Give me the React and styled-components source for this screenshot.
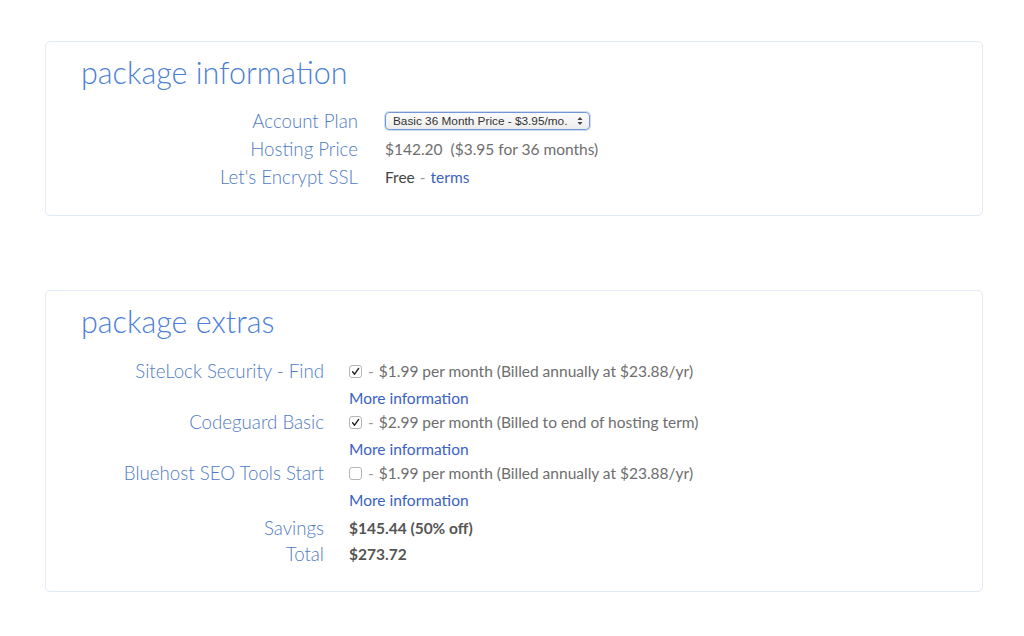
import React from "react";
import styled, { createGlobalStyle } from "styled-components";

const Global = createGlobalStyle`
  html, body { margin: 0; padding: 0; background: #ffffff; }
  body { font-family: Lato, "Open Sans", sans-serif; }
  * { box-sizing: border-box; }
`;

const Page = styled.div`
  width: 1024px;
  height: 636px;
  padding: 41px 41px 0 45px;
  display: flex;
  flex-direction: column;
  gap: 74px;
`;

const Panel = styled.section`
  width: 938px;
  height: ${(p) => p.$h}px;
  border: 1px solid #e1eaf6;
  border-radius: 5px;
  padding: 12px 35px 0 35px;
`;

const Title = styled.h2`
  margin: 0;
  font-weight: 300;
  font-size: 30.5px;
  line-height: 36px;
  color: #4d7fd6;
`;

const Grid = styled.div`
  display: grid;
  grid-template-columns: ${(p) => p.$label}px auto;
  column-gap: ${(p) => p.$gap}px;
  margin-top: ${(p) => p.$mt}px;
  justify-content: start;
`;

const Label = styled.div`
  text-align: right;
  font-weight: 300;
  font-size: 18.7px;
  line-height: ${(p) => p.$lh || 28}px;
  height: ${(p) => (p.$lh || 28) + (p.$pt || 0)}px;
  padding-top: ${(p) => p.$pt || 0}px;
  color: #4f7bc4;
  white-space: nowrap;
`;

const Value = styled.div`
  font-size: 15.5px;
  line-height: ${(p) => p.$lh || 28}px;
  height: ${(p) => (p.$lh || 28) + (p.$pt || 0)}px;
  padding-top: ${(p) => p.$pt || 0}px;
  color: #6e6e6e;
  font-weight: 400;
  white-space: nowrap;
  display: flex;
  align-items: center;
`;

const Strong = styled.span`
  color: ${(p) => (p.$plain ? "#444444" : "#555555")};
  font-weight: ${(p) => (p.$plain ? 400 : 700)};
`;

const Dash = styled.span`
  color: #9a9a9a;
  margin: 0 5px;
`;

const Link = styled.a`
  color: #3a62c2;
  text-decoration: none;
  font-size: 15.5px;
`;

const SelectWrap = styled.div`
  position: relative;
  display: flex;
  width: 205px;
  height: 18px;
`;

const Select = styled.select`
  appearance: none;
  -webkit-appearance: none;
  display: block;
  margin: 0;
  width: 100%;
  height: 18px;
  border: 1px solid #7297d6;
  border-radius: 4px;
  background: linear-gradient(#fdfdfd, #ececec);
  font-family: "Liberation Sans", Arial, sans-serif;
  font-size: 11.8px;
  color: #333;
  padding: 0 0 0 7px;
  line-height: 16px;
  box-shadow: 0 0 0 1px #d0ddf3;
  outline: none;
`;

const SelectArrows = styled.svg`
  position: absolute;
  right: 7px;
  top: 4px;
  pointer-events: none;
`;

const Box = styled.span`
  width: 13px;
  height: 13px;
  border: 1px solid #b5b5b5;
  border-radius: 3px;
  background: #fff;
  display: inline-flex;
  align-items: center;
  justify-content: center;
  margin-right: 1px;
  margin-top: 1px;
`;

function Checkbox({ checked }) {
  return (
    <Box>
      {checked && (
        <svg width="9" height="9" viewBox="0 0 9 9">
          <path d="M1.6 4.8 L3.6 7.2 L7.6 1.4" fill="none" stroke="#222" strokeWidth="1.4" strokeLinecap="round" strokeLinejoin="round" />
        </svg>
      )}
    </Box>
  );
}

const extras = [
  { name: "SiteLock Security - Find", checked: true, text: "$1.99 per month (Billed annually at $23.88/yr)" },
  { name: "Codeguard Basic", checked: true, text: "$2.99 per month (Billed to end of hosting term)" },
  { name: "Bluehost SEO Tools Start", checked: false, text: "$1.99 per month (Billed annually at $23.88/yr)" },
];

export default function App() {
  return (
    <>
      <Global />
      <Page>
        <Panel $h={175}>
          <Title>package information</Title>
          <Grid $label={277} $gap={27} $mt={17}>
            <Label>Account Plan</Label>
            <Value>
              <SelectWrap>
                <Select defaultValue="basic36">
                  <option value="basic36">Basic 36 Month Price - $3.95/mo.</option>
                </Select>
                <SelectArrows width="6" height="10" viewBox="0 0 6 10">
                  <path d="M0.5 4 L3 1 L5.5 4 Z" fill="#444" />
                  <path d="M0.5 6 L3 9 L5.5 6 Z" fill="#444" />
                </SelectArrows>
              </SelectWrap>
            </Value>
            <Label>Hosting Price</Label>
            <Value>$142.20&nbsp;&nbsp;($3.95 for 36 months)</Value>
            <Label>Let's Encrypt SSL</Label>
            <Value>
              <Strong $plain>Free</Strong>
              <Dash>-</Dash>
              <Link href="#">terms</Link>
            </Value>
          </Grid>
        </Panel>

        <Panel $h={302}>
          <Title>package extras</Title>
          <Grid $label={243} $gap={25} $mt={20}>
            {extras.map((e) => (
              <React.Fragment key={e.name}>
                <Label $lh={24}>{e.name}</Label>
                <Value $lh={24}>
                  <Checkbox checked={e.checked} />
                  <Dash>-</Dash>
                  {e.text}
                </Value>
                <Label $lh={24} $pt={3} />
                <Value $lh={24} $pt={3}>
                  <Link href="#">More information</Link>
                </Value>
              </React.Fragment>
            ))}
            <Label $lh={26} $pt={3}>Savings</Label>
            <Value $lh={26} $pt={3}>
              <Strong>$145.44 (50% off)</Strong>
            </Value>
            <Label $lh={26}>Total</Label>
            <Value $lh={26}>
              <Strong>$273.72</Strong>
            </Value>
          </Grid>
        </Panel>
      </Page>
    </>
  );
}
